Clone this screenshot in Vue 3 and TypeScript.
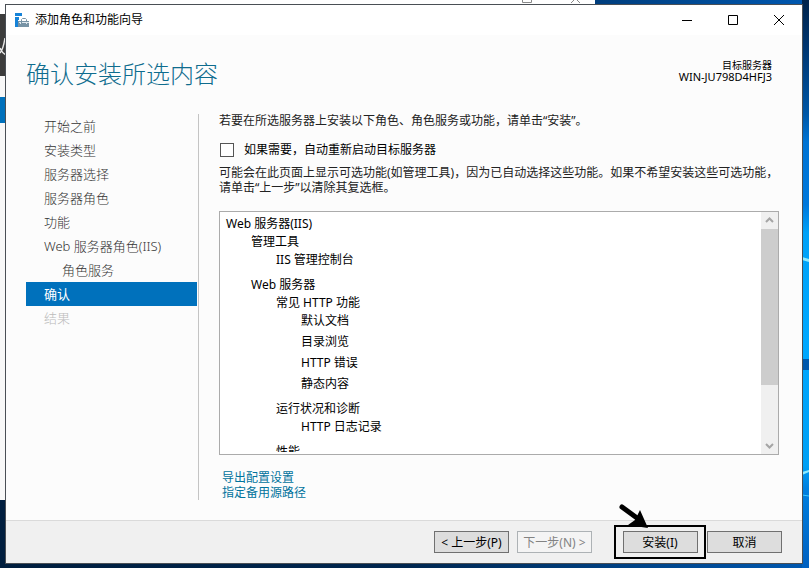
<script setup lang="ts">
import { ref } from 'vue'

interface Step {
  label: string
  state?: 'active' | 'disabled'
  child?: boolean
}

interface Feature {
  label: string
  level: number
  gap: number
}

const steps: Step[] = [
  { label: '开始之前' },
  { label: '安装类型' },
  { label: '服务器选择' },
  { label: '服务器角色' },
  { label: '功能' },
  { label: 'Web 服务器角色(IIS)' },
  { label: '角色服务', child: true },
  { label: '确认', state: 'active' },
  { label: '结果', state: 'disabled' },
]

// gap: 0 = first child, 1 = sibling leaf, 2 = new group
const features: Feature[] = [
  { label: 'Web 服务器(IIS)', level: 0, gap: 0 },
  { label: '管理工具', level: 1, gap: 0 },
  { label: 'IIS 管理控制台', level: 2, gap: 0 },
  { label: 'Web 服务器', level: 1, gap: 2 },
  { label: '常见 HTTP 功能', level: 2, gap: 0 },
  { label: '默认文档', level: 3, gap: 0 },
  { label: '目录浏览', level: 3, gap: 1 },
  { label: 'HTTP 错误', level: 3, gap: 1 },
  { label: '静态内容', level: 3, gap: 1 },
  { label: '运行状况和诊断', level: 2, gap: 2 },
  { label: 'HTTP 日志记录', level: 3, gap: 0 },
  { label: '性能', level: 2, gap: 2 },
]

const autoRestart = ref(false)
</script>

<template>
  <div class="desktop">
    <svg class="wallpaper" viewBox="0 0 7 568" preserveAspectRatio="none" aria-hidden="true">
      <defs>
        <linearGradient id="glow" x1="0" y1="0" x2="0" y2="1">
          <stop offset="0" stop-color="#00234b" />
          <stop offset="0.08" stop-color="#00356f" />
          <stop offset="0.2" stop-color="#0057a6" />
          <stop offset="0.25" stop-color="#0074d4" />
          <stop offset="0.36" stop-color="#0078dc" />
          <stop offset="0.41" stop-color="#00a2f8" />
          <stop offset="0.6" stop-color="#00a8ff" />
          <stop offset="0.82" stop-color="#00a0f5" />
          <stop offset="0.86" stop-color="#0080e0" />
          <stop offset="1" stop-color="#0060c0" />
        </linearGradient>
      </defs>
      <rect width="7" height="568" fill="url(#glow)" />
      <rect y="359" width="7" height="11" fill="#0058ac" />
      <path d="M0 257 L7 259 V262 L0 260 Z M0 472 L7 470 V472 L0 475 Z" fill="#8eeaff" />
      <path d="M0 495 L7 496" stroke="#3cc8ff" />
    </svg>
    <div class="behind" aria-hidden="true">
      <div class="behind-top">
        <svg viewBox="0 0 60 4"><path d="M1.500 0V2.500H10.500V0 M50 3L53 0 M59 3L56 0" fill="none" stroke="#8a8a8a" /></svg>
      </div>
      <div class="behind-banner">
        <svg viewBox="0 0 6 62"><path d="M0 39Q3 36 5 24 M0 34Q2 39 6 41" fill="none" stroke="#e8e8e8" stroke-width="1.500" /></svg>
      </div>
      <div class="behind-page"><div class="behind-tab"></div></div>
    </div>

    <main class="window">
      <header class="titlebar">
        <svg class="app-icon" viewBox="0 0 15 15" aria-hidden="true">
          <path d="M0 0H7V3H0Z M0 4H4V7H3V14H0Z" fill="#1683d8" />
          <path d="M3 8H14V14H3Z" fill="#7793a5" />
          <path d="M6.500 8V6.500L7.500 5.500H10.500L11.500 6.500V8" fill="none" stroke="#7793a5" />
          <path d="M4 9.500H6M7 9.500H11M12 9.500H14M5.500 9V11M11.500 9V11" stroke="#dfe8ee" />
        </svg>
        <span class="caption">添加角色和功能向导</span>
        <div class="window-buttons">
          <button type="button" aria-label="最小化"><svg viewBox="0 0 12 12"><path d="M1 6.500H11" /></svg></button>
          <button type="button" aria-label="最大化"><svg viewBox="0 0 12 12"><path d="M1.500 1.500H10.500V10.500H1.500Z" /></svg></button>
          <button type="button" aria-label="关闭"><svg viewBox="0 0 12 12"><path d="M1 1L11 11M11 1L1 11" /></svg></button>
        </div>
      </header>

      <div class="heading">
        <h1>确认安装所选内容</h1>
        <div class="target">
          <div>目标服务器</div>
          <div class="host">WIN-JU798D4HFJ3</div>
        </div>
      </div>

      <div class="body">
        <nav class="steps">
          <a
            v-for="step in steps"
            :key="step.label"
            href="#"
            :class="[step.state, { child: step.child }]"
          >{{ step.label }}</a>
        </nav>

        <section class="content">
          <p class="intro">若要在所选服务器上安装以下角色、角色服务或功能，请单击“安装”。</p>
          <label class="restart">
            <input v-model="autoRestart" type="checkbox" />
            <span>如果需要，自动重新启动目标服务器</span>
          </label>
          <p class="note">可能会在此页面上显示可选功能(如管理工具)，因为已自动选择这些功能。如果不希望安装这些可选功能，请单击“上一步”以清除其复选框。</p>

          <div class="list-box">
            <ul>
              <li v-for="f in features" :key="f.label" :class="['level-' + f.level, 'gap-' + f.gap]">{{ f.label }}</li>
            </ul>
            <div class="scrollbar">
              <button type="button" aria-label="向上滚动"><svg viewBox="0 0 9 9"><path d="M1 6L4.500 2.500L8 6" /></svg></button>
              <div class="track"><div class="thumb"></div></div>
              <button type="button" aria-label="向下滚动"><svg viewBox="0 0 9 9"><path d="M1 3L4.500 6.500L8 3" /></svg></button>
            </div>
          </div>

          <div class="links">
            <a href="#">导出配置设置</a>
            <a href="#">指定备用源路径</a>
          </div>
        </section>
      </div>

      <footer class="actions">
        <button type="button">&lt; 上一步(P)</button>
        <button type="button" disabled>下一步(N) &gt;</button>
        <div class="marked">
          <button type="button">安装(I)</button>
          <svg class="pointer" viewBox="0 0 30 26" aria-hidden="true">
            <path d="M4 4L19 15" fill="none" stroke="#000" stroke-width="5" stroke-linecap="round" />
            <path d="M22 7L30 25L10 22L17 17Z" />
          </svg>
        </div>
        <button type="button">取消</button>
      </footer>
    </main>
  </div>
</template>

<style>
body {
  margin: 0;
}
</style>

<style scoped>
* {
  box-sizing: border-box;
}

.desktop {
  position: relative;
  display: flex;
  height: 100vh;
  padding: 4px 6px 4px 5px;
  overflow: hidden;
  background: linear-gradient(90deg, #001e3e, #00264f 50%, #0058b0);
  color: #000;
  font: 12px/16px "Noto Sans", "Noto Sans CJK SC", sans-serif;
}

.wallpaper {
  position: absolute;
  top: 0;
  right: 0;
  width: 7px;
  height: 100%;
}

.behind {
  position: absolute;
  top: 0;
  left: 0;
  width: 595px;
  height: 500px;
}

.behind-top {
  display: flex;
  justify-content: flex-end;
  height: 14px;
  padding-right: 14px;
  background: #fff;
}

.behind-top svg {
  width: 60px;
  height: 4px;
}

.behind-banner {
  height: 62px;
  background: #3c3c3c;
}

.behind-banner svg {
  display: block;
  width: 6px;
  height: 62px;
}

.behind-page {
  height: 424px;
  padding-top: 21px;
  background: #f8f8f8;
}

.behind-tab {
  height: 26px;
  background: #0071bc;
}

.window {
  position: relative;
  display: flex;
  flex: 1;
  flex-direction: column;
  min-width: 0;
  border: 1px solid #4a4f55;
  background: #fcfcfc;
}

.titlebar {
  display: flex;
  align-items: center;
  height: 30px;
  padding-left: 9px;
  background: #fff;
}

.app-icon {
  width: 15px;
  height: 15px;
}

.caption {
  flex: 1;
  padding-left: 5px;
}

.window-buttons {
  display: flex;
}

.window-buttons button {
  display: grid;
  place-items: center;
  width: 46px;
  height: 28px;
  padding: 0;
  border: 0;
  background: none;
}

.window-buttons svg {
  width: 12px;
  height: 12px;
  fill: none;
  stroke: #000;
}

.heading {
  display: flex;
  justify-content: space-between;
  height: 78px;
  padding: 22px 30px 0 20px;
}

h1 {
  margin: 0;
  color: #0f6c8e;
  font-size: 24px;
  font-weight: 300;
  line-height: 34px;
}

.target {
  padding-top: 2px;
  font-size: 10px;
  line-height: 12px;
  text-align: right;
}

.host {
  font-size: 11px;
}

.body {
  display: flex;
  flex: 1;
  min-height: 0;
  padding: 0 23px 20px 20px;
}

.steps {
  display: flex;
  flex-direction: column;
  width: 173px;
  margin-top: 1px;
  padding-right: 1px;
  border-right: 1px solid #c4c4c4;
}

.steps a {
  height: 24px;
  padding-left: 18px;
  color: #333;
  font-size: 13px;
  font-weight: 300;
  line-height: 24px;
  text-decoration: none;
}

.steps a.child {
  padding-left: 36px;
}

.steps a.active {
  background: #0071bc;
  color: #fff;
  font-weight: 400;
}

.steps a.disabled {
  color: #bbb;
}

.content {
  display: flex;
  flex: 1;
  flex-direction: column;
  min-width: 0;
  padding-left: 20px;
}

.content p {
  margin: 0;
  color: #222;
}

.intro {
  padding-bottom: 13px;
}

.restart {
  display: flex;
  align-items: center;
  gap: 10px;
  height: 16px;
}

.restart input {
  appearance: none;
  width: 14px;
  height: 14px;
  margin: 0 0 0 1px;
  border: 1px solid #555;
  background: #fff;
}

.note {
  padding-top: 7px;
  line-height: 15px;
}

.list-box {
  display: flex;
  flex: 1;
  min-height: 0;
  margin-top: 16px;
  border: 1px solid #ababab;
  background: #fff;
}

ul {
  flex: 1;
  margin: 0 0 2px;
  padding: 3px 6px 0;
  overflow: hidden;
  list-style: none;
}

li {
  line-height: 18px;
}

.level-1 {
  padding-left: 25px;
}

.level-2 {
  padding-left: 50px;
}

.level-3 {
  padding-left: 75px;
}

.gap-1 {
  padding-top: 3px;
}

.gap-2 {
  padding-top: 7px;
}

.scrollbar {
  display: flex;
  flex-direction: column;
  width: 17px;
  background: #f0f0f0;
}

.scrollbar button {
  display: grid;
  place-items: center;
  height: 17px;
  padding: 0;
  border: 0;
  background: none;
}

.scrollbar svg {
  width: 9px;
  height: 9px;
  fill: none;
  stroke: #a5a5a5;
  stroke-width: 2;
}

.track {
  flex: 1;
}

.thumb {
  height: 75%;
  background: #cdcdcd;
}

.links {
  display: flex;
  flex-direction: column;
  align-items: flex-start;
  padding: 15px 0 0 3px;
}

.links a {
  color: #00739c;
  line-height: 15px;
  text-decoration: none;
}

.actions {
  display: flex;
  align-items: center;
  justify-content: flex-end;
  height: 43px;
  padding-right: 20px;
  border-top: 1px solid #dadada;
  background: #f0f0f0;
}

.actions button {
  width: 75px;
  height: 22px;
  padding: 1px 0 0;
  border: 1px solid #707070;
  background: #ddd;
  color: #000;
  font: inherit;
  line-height: 19px;
  white-space: nowrap;
}

.actions button:disabled {
  margin: 0 22px 0 8px;
  border-color: #adb2b5;
  background: #f4f4f4;
  color: #838383;
}

.marked {
  position: relative;
  display: grid;
  place-items: center;
  width: 92px;
  height: 34px;
  margin-right: 1px;
  border: 2px solid #000;
}

.pointer {
  position: absolute;
  top: -24px;
  left: 2px;
  width: 30px;
  height: 26px;
}
</style>
